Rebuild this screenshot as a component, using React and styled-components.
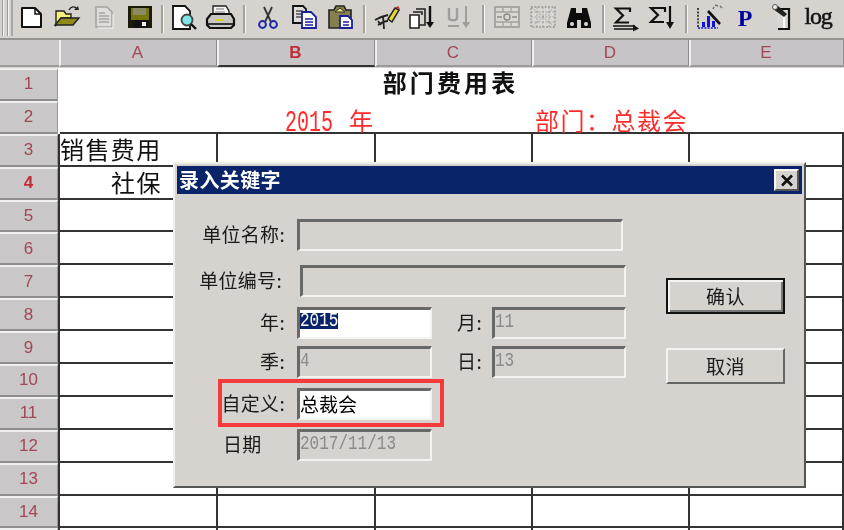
import React from "react";
import styled, { createGlobalStyle } from "styled-components";

const cjk = `"Noto Sans CJK SC", "Liberation Sans", sans-serif`;
const mono = `"Liberation Mono", "Noto Sans CJK SC", monospace`;

const Global = createGlobalStyle`
  html, body { margin: 0; padding: 0; background: #fff; overflow: hidden; }
  * { box-sizing: border-box; }
`;

const Page = styled.div`
  position: relative; width: 844px; height: 530px; overflow: hidden;
  background: #fff; font-family: ${cjk}; filter: blur(0.35px);
`;
const Toolbar = styled.div`
  display: flex; height: 38px; background: #d6d3ce; align-items: flex-start;
`;
const Grip = styled.div`
  width: 13px; height: 36px; flex: none;
  border-right: 2px solid #a9a7a3;
  background: linear-gradient(90deg, #d6d3ce 0 2px, #999 2px 3px, #f4f4f0 3px 4px, #d6d3ce 4px 7px, #999 7px 8px, #f4f4f0 8px 9px, #d6d3ce 9px);
`;
const Tool = styled.div`
  width: 36.3px; height: 38px; flex: none;
  svg { display: block; width: 36px; height: 38px; }
`;
const Sep = styled.div`
  width: ${p => p.$w}px; height: 38px; flex: none; display: flex; justify-content: center;
  &::after { content: ""; display: block; width: 2px; height: 28px; margin-top: 5px; background: #a3a19d; box-shadow: 1px 0 0 #f6f5f2; }
`;

const HeaderRow = styled.div`
  display: grid; grid-template-columns: 59px 158px 158px 157px 157px 155px;
  height: 30px; background: #d6d3ce; border-top: 2px solid #96948f;
`;
const Corner = styled.div`
  height: 27px; background: #c9c7c8; border-bottom: 2px solid #9b9a98;
`;
const ColHead = styled.div`
  display: flex; align-items: center; justify-content: center; height: 27px;
  background: #c6c4c6; border-left: 2px solid #efefef; border-right: 1px solid #8f8d8d;
  border-bottom: ${p => p.$active ? "2px solid #333" : "2px solid #9b9a98"};
  font: ${p => p.$active ? "bold" : "normal"} 17px "Liberation Sans", sans-serif;
  color: ${p => p.$active ? "#c22c38" : "#a14755"};
  padding-right: 2px;
`;
const Sheet = styled.div`
  display: grid; grid-template-columns: 60px 158px 158px 157px 157px 154px;
  grid-auto-rows: 32.9px;
`;
const RowHead = styled.div`
  display: flex; align-items: center; justify-content: center; width: 58px;
  background: #c9c7c8; border-top: 2px solid #efefef; border-bottom: 2px solid #8f8d8d;
  border-right: 1px solid #999;
  font: ${p => p.$active ? "bold" : "normal"} 17px "Liberation Sans", sans-serif;
  color: ${p => p.$active ? "#c22c38" : "#a14755"};
`;
const Title = styled.div`
  grid-column: 2 / 7; display: flex; justify-content: center; align-items: center;
  font-size: 24px; font-weight: 700; letter-spacing: 3.1px; color: #111; line-height: 1;
  padding-right: 3px; padding-bottom: 4px;
`;
const RedCell = styled.div`
  display: flex; align-items: flex-end; color: #ff2a2a; font-size: 24px; line-height: 1; white-space: nowrap;
  padding-left: ${p => p.$pad || 0}px; letter-spacing: ${p => p.$ls || 0}px;
  border-bottom: 2px solid #333;
`;
const Num = styled.span`
  display: inline-block; font: 20px/20px ${mono}; margin-right: 16px;
  transform: translateY(6px) scaleY(1.45); transform-origin: 50% 100%;
`;
const Cell = styled.div`
  border-right: 2px solid #333; border-bottom: 2px solid #333;
  border-left: ${p => p.$first ? "2px solid #333" : "0"};
  margin-left: ${p => p.$first ? "-2px" : "0"};
  font-size: 24px; letter-spacing: 1.4px; line-height: 30px; color: #111; white-space: nowrap;
  padding-left: ${p => p.$pad || 0}px;
`;

const Dialog = styled.div`
  position: absolute; left: 173px; top: 162px; width: 633px; height: 326px;
  background: #d6d3ce; padding: 2px;
  border-style: solid; border-width: 2px;
  border-color: #f1efeb #555 #555 #f1efeb;
  display: flex; flex-direction: column;
`;
const TitleBar = styled.div`
  height: 28px; background: #0a246a; display: flex; align-items: center; justify-content: space-between;
  color: #fff; font-size: 20px; font-weight: 700; letter-spacing: 0.4px; padding: 0 3px 0 2px; line-height: 1;
`;
const CloseBtn = styled.div`
  width: 25px; height: 22px; background: #d6d3ce; display: flex; align-items: center; justify-content: center;
  border-style: solid; border-width: 2px; border-color: #f7f6f3 #555 #555 #f7f6f3;
  svg { width: 14px; height: 13px; display: block; }
`;
const Body = styled.div`
  display: flex; padding-top: 25px;
`;
const Form = styled.div`
  width: 448px; flex: none;
  display: grid; grid-template-rows: 46px 42px 39px 42px 41px 32px;
`;
const Row = styled.div`
  display: flex; align-items: flex-start;
`;
const Label = styled.div`
  width: ${p => p.$w}px; height: 32px; flex: none; margin-right: ${p => p.$mr}px; line-height: 29px;
  font-size: 19px; letter-spacing: 0.3px; color: #1a1a1a; white-space: nowrap;
  text-align: ${p => p.$left ? "left" : "right"};
  padding-left: ${p => p.$left ? 46 : 0}px;
`;
const Field = styled.div`
  width: ${p => p.$w}px; height: 32px; flex: none;
  border-style: solid; border-width: 3px 2px 2px 3px;
  border-color: #686868 #f4f3ef #f4f3ef #686868;
  background: ${p => p.$on ? "#fff" : "#d6d3ce"};
  color: ${p => p.$on ? "#000" : "#8a8a8a"};
  font: ${p => p.$cjk ? `19px ${cjk}` : `16px ${mono}`};
  line-height: 26px; white-space: nowrap;
`;
const Value = styled.span`
  display: inline-block; line-height: 16px; height: 16px; vertical-align: 1px;
  transform: scaleY(1.3); transform-origin: 50% 50%;
`;
const Selected = styled.span`
  display: inline-block; line-height: 16px; height: 16px; vertical-align: 1px;
  background: #0a246a; color: #fff;
`;
const Buttons = styled.div`
  display: flex; flex-direction: column; gap: 34px; margin-left: 41px; padding-top: 59px;
`;
const Button = styled.div`
  width: 119px; height: 36px; display: flex; align-items: center; justify-content: center;
  background: #d6d3ce; font-size: 19px; letter-spacing: 0.5px; color: #1a1a1a; line-height: 1; padding-bottom: 2px;
  border-style: solid; border-width: 2px;
  border-color: ${p => p.$default ? "#111" : "#f4f3ef #666 #666 #f4f3ef"};
  box-shadow: ${p => p.$default ? "inset 2px 2px 0 #f4f3ef, inset -2px -2px 0 #777" : "none"};
`;
const Callout = styled.div`
  position: absolute; left: 43px; top: 215px; width: 226px; height: 48px;
  border: 4px solid #f43a3a; pointer-events: none;
`;

const I = ({ children }) => <svg viewBox="0 0 36 38">{children}</svg>;
const icons = {
  newDoc: <I><path d="M9 8h13l6 6v13H9z" fill="#fff" stroke="#111" strokeWidth="2" strokeLinejoin="round" /><path d="M22 8v6h6" fill="none" stroke="#111" strokeWidth="1.5" /></I>,
  open: <I><path d="M7 11h8l2 3h5v4H12l-5 7z" fill="#f4f07a" stroke="#222" strokeWidth="1.4" /><path d="M12 18h18l-6 7H6z" fill="#8e8a1e" stroke="#222" strokeWidth="1.4" /><path d="M20 10c2-4 6-4 8-1" fill="none" stroke="#222" strokeWidth="1.4" /><path d="M25 10l5 0-1-4z" fill="#222" /></I>,
  docOff: <I><path d="M10 7h11l5 5v15H10z" fill="#dedcd8" stroke="#a6a4a0" strokeWidth="1.6" /><path d="M13 13h6M13 16h10M13 19h10M13 22h10" stroke="#a6a4a0" strokeWidth="1.4" /><path d="M12 28h15V14" fill="none" stroke="#f6f5f2" /></I>,
  save: <I><rect x="6" y="6" width="24" height="22" fill="#1a1a06" /><rect x="9" y="8" width="18" height="10" fill="#77770e" /><rect x="11" y="8" width="13" height="7" fill="#8a8a66" /><rect x="9" y="18" width="18" height="2" fill="#77770e" /><rect x="12" y="20" width="14" height="8" fill="#111" /><rect x="20" y="22" width="4" height="4" fill="#eee" /></I>,
  preview: <I><path d="M7 6h12l5 5v18H7z" fill="#fff" stroke="#111" strokeWidth="1.8" /><circle cx="21" cy="20" r="5.5" fill="#7fe5e5" stroke="#444" strokeWidth="1.8" /><path d="M25 24l5 5" stroke="#111" strokeWidth="2.4" /></I>,
  print: <I><path d="M11 6h13l3 5v5H11z" fill="#f5f5f5" stroke="#222" strokeWidth="1.4" /><path d="M14 9h8M13 12h10" stroke="#777" /><path d="M5 19l4-5h20l3 5v6l-3 3H8l-3-3z" fill="#c8c6c2" stroke="#111" strokeWidth="2.2" /><path d="M6 24h25" stroke="#222" strokeWidth="1.8" /><path d="M14 20h8" stroke="#d8d020" strokeWidth="2" /></I>,
  cut: <I><path d="M14 7l7 15M22 7l-7 15" stroke="#333" strokeWidth="1.8" /><circle cx="12.5" cy="24.5" r="3.4" fill="none" stroke="#1f2aa8" strokeWidth="2" /><circle cx="23.5" cy="24.5" r="3.4" fill="none" stroke="#1f2aa8" strokeWidth="2" /></I>,
  copy: <I><path d="M7 6h10l3 3v14H7z" fill="#ddd" stroke="#111" strokeWidth="1.8" /><path d="M10 11h7M10 14h7M10 17h6" stroke="#111" strokeWidth="1.2" /><path d="M16 12h9l5 5v11H16z" fill="#fff" stroke="#18209a" strokeWidth="1.8" /><path d="M19 19h8M19 22h8M19 25h8" stroke="#18209a" strokeWidth="1.3" /></I>,
  paste: <I><path d="M7 10h5l2-4h8l2 4h5v18H7z" fill="#85814f" stroke="#222" strokeWidth="1.6" /><path d="M13 12l5-4 5 4z" fill="#e4e07a" stroke="#333" /><path d="M18 16h8l4 4v8H18z" fill="#fff" stroke="#18209a" strokeWidth="1.8" /><path d="M21 22h6M21 25h6" stroke="#18209a" strokeWidth="1.3" /></I>,
  wand: <I><path d="M6 20c5-3 8-4 13-5M9 25c3-2 7-4 10-4M14 16l1 13M9 21l3 4" fill="none" stroke="#222" strokeWidth="1.8" /><path d="M19 19l7-11 4 2-7 12z" fill="#ecdc2a" stroke="#222" strokeWidth="1.5" /><path d="M26 8l3-2 2 3z" fill="#d0202a" /></I>,
  layers: <I><path d="M5 15h9v13H5z" fill="#fff" stroke="#222" strokeWidth="1.6" /><path d="M8 12h9v3M11 9h9v16h-6" fill="none" stroke="#222" strokeWidth="1.6" /><path d="M25 6v18" stroke="#111" strokeWidth="2.4" /><path d="M21 22h8l-4 6z" fill="#111" /></I>,
  vDown: <I><path d="M8 8v10c0 3 8 3 8 0V8" fill="none" stroke="#a09e9a" strokeWidth="2.4" /><path d="M7 26h11" stroke="#a09e9a" strokeWidth="2" /><path d="M25 6v17" stroke="#a09e9a" strokeWidth="2" /><path d="M21 22h8l-4 6z" fill="#a09e9a" /></I>,
  table: <I><rect x="6" y="7" width="24" height="20" fill="#dad8d3" stroke="#a3a19d" strokeWidth="1.8" /><path d="M6 12h24M6 22h24M14 7v5M22 7v5M14 22v5M22 22v5" stroke="#a3a19d" strokeWidth="1.3" /><path d="M8 17h5M23 17h5" stroke="#8e8c88" strokeWidth="1.5" /><circle cx="18" cy="17" r="3" fill="none" stroke="#8e8c88" strokeWidth="1.5" /></I>,
  gridOff: <I><rect x="6" y="7" width="24" height="20" fill="#dad8d3" stroke="#a8a6a2" strokeWidth="1.8" strokeDasharray="2 1.4" /><path d="M6 7l24 20M30 7L6 27M18 7v20M6 17h24M12 7v20M24 7v20M6 12h24M6 22h24" stroke="#a3a19d" strokeWidth="1" strokeDasharray="2 1.6" /></I>,
  binoc: <I><path d="M10 8h5v5h6V8h5l4 15v5H20v-8h-4v8H6v-5z" fill="#0c0c0c" /><circle cx="11" cy="24" r="2" fill="#ddd" /><circle cx="25" cy="24" r="2" fill="#ddd" /></I>,
  sumRight: <I><path d="M21 13V9.5H7l7 7-7 7h13" fill="none" stroke="#111" strokeWidth="2.2" transform="translate(1 -1)" /><path d="M5 26h22M6 29h22" stroke="#111" strokeWidth="1.7" /><path d="M25 24.5l6 4-6 3z" fill="#111" /></I>,
  sumDown: <I><path d="M20 12V8H6l7 7-7 7h13" fill="none" stroke="#111" strokeWidth="2.2" /><path d="M25 6v18" stroke="#111" strokeWidth="2.2" /><path d="M21 22h8l-4 7z" fill="#111" /></I>,
  chart: <I><path d="M7 8v20" stroke="#222" strokeWidth="1.6" strokeDasharray="2 1.4" /><path d="M7 28h20" stroke="#1010e0" strokeWidth="1.6" strokeDasharray="2 1.2" /><rect x="11" y="22" width="3" height="5" fill="#1010e0" /><rect x="16" y="16" width="3" height="11" fill="#1010e0" /><rect x="21" y="21" width="3" height="6" fill="#1010e0" /><path d="M17 11l12 13" stroke="#111" strokeWidth="2.6" /><path d="M24 5l3 1M29 6l2 2M22 9l1-2" stroke="#777" strokeWidth="1.6" /></I>,
  pLetter: <I><text x="18" y="26" textAnchor="middle" fontFamily="Liberation Serif, serif" fontWeight="700" fontSize="24" fill="#00009a">P</text></I>,
  note: <I><path d="M11 9l14 0v20H14" fill="#d8d6d2" stroke="#111" strokeWidth="2.2" /><path d="M20 11v17" stroke="#fff" strokeWidth="2" /><path d="M9 9l11 8 3-3-9-8z" fill="#222" /><circle cx="11" cy="7" r="2.5" fill="#eee" stroke="#555" /></I>,
  log: <I><text x="18" y="24" textAnchor="middle" fontFamily="Liberation Serif, serif" fontSize="24" letterSpacing="-1.2" fill="#111" stroke="#111" strokeWidth="0.5">log</text></I>,
};

const toolbar = [
  ["i", "newDoc"], ["i", "open"], ["i", "docOff"], ["i", "save"], ["s", 8],
  ["i", "preview"], ["i", "print"], ["s", 11],
  ["i", "cut"], ["i", "copy"], ["i", "paste"], ["s", 10],
  ["i", "wand"], ["i", "layers"], ["i", "vDown"], ["s", 11],
  ["i", "table"], ["i", "gridOff"], ["i", "binoc"], ["s", 11],
  ["i", "sumRight"], ["i", "sumDown"], ["s", 10],
  ["i", "chart"], ["i", "pLetter"], ["i", "note"], ["i", "log"],
];

const cols = ["A", "B", "C", "D", "E"];
const emptyRows = [5, 6, 7, 8, 9, 10, 11, 12, 13, 14, ""];

export default function App() {
  return (
    <Page>
      <Global />
      <Toolbar>
        <Grip />
        {toolbar.map(([kind, v], i) =>
          kind === "i" ? <Tool key={i}>{icons[v]}</Tool> : <Sep key={i} $w={v} />
        )}
      </Toolbar>
      <HeaderRow>
        <Corner />
        {cols.map(c => <ColHead key={c} $active={c === "B"}>{c}</ColHead>)}
      </HeaderRow>
      <Sheet>
        <RowHead>1</RowHead>
        <Title>部门费用表</Title>
        <RowHead>2</RowHead>
        <RedCell />
        <RedCell $pad={67}><Num>2015</Num>年</RedCell>
        <RedCell />
        <RedCell $pad={2} $ls={1.5}>部门：总裁会</RedCell>
        <RedCell />
        <RowHead>3</RowHead>
        <Cell $first>销售费用</Cell><Cell /><Cell /><Cell /><Cell />
        <RowHead $active>4</RowHead>
        <Cell $first $pad={51}>社保</Cell><Cell /><Cell /><Cell /><Cell />
        {emptyRows.map((n, i) => (
          <React.Fragment key={i}>
            <RowHead>{n}</RowHead>
            <Cell $first /><Cell /><Cell /><Cell /><Cell />
          </React.Fragment>
        ))}
      </Sheet>
      <Dialog>
        <TitleBar>
          录入关键字
          <CloseBtn>
            <svg viewBox="0 0 14 13"><path d="M2 1.5l10 10M12 1.5l-10 10" stroke="#111" strokeWidth="2.6" /></svg>
          </CloseBtn>
        </TitleBar>
        <Body>
          <Form>
            <Row><Label $w={108} $mr={12}>单位名称:</Label><Field $w={326} /></Row>
            <Row><Label $w={105} $mr={18}>单位编号:</Label><Field $w={326} /></Row>
            <Row>
              <Label $w={108} $mr={12}>年:</Label>
              <Field $w={135} $on><Selected><Value>2015</Value></Selected></Field>
              <Label $w={50} $mr={10}>月:</Label>
              <Field $w={134}><Value>11</Value></Field>
            </Row>
            <Row>
              <Label $w={108} $mr={12}>季:</Label>
              <Field $w={135}><Value>4</Value></Field>
              <Label $w={50} $mr={10}>日:</Label>
              <Field $w={134}><Value>13</Value></Field>
            </Row>
            <Row><Label $w={108} $mr={12}>自定义:</Label><Field $w={135} $on $cjk>总裁会</Field></Row>
            <Row><Label $w={108} $mr={12} $left>日期</Label><Field $w={135}><Value>2017/11/13</Value></Field></Row>
          </Form>
          <Buttons>
            <Button $default>确认</Button>
            <Button>取消</Button>
          </Buttons>
        </Body>
        <Callout />
      </Dialog>
    </Page>
  );
}
